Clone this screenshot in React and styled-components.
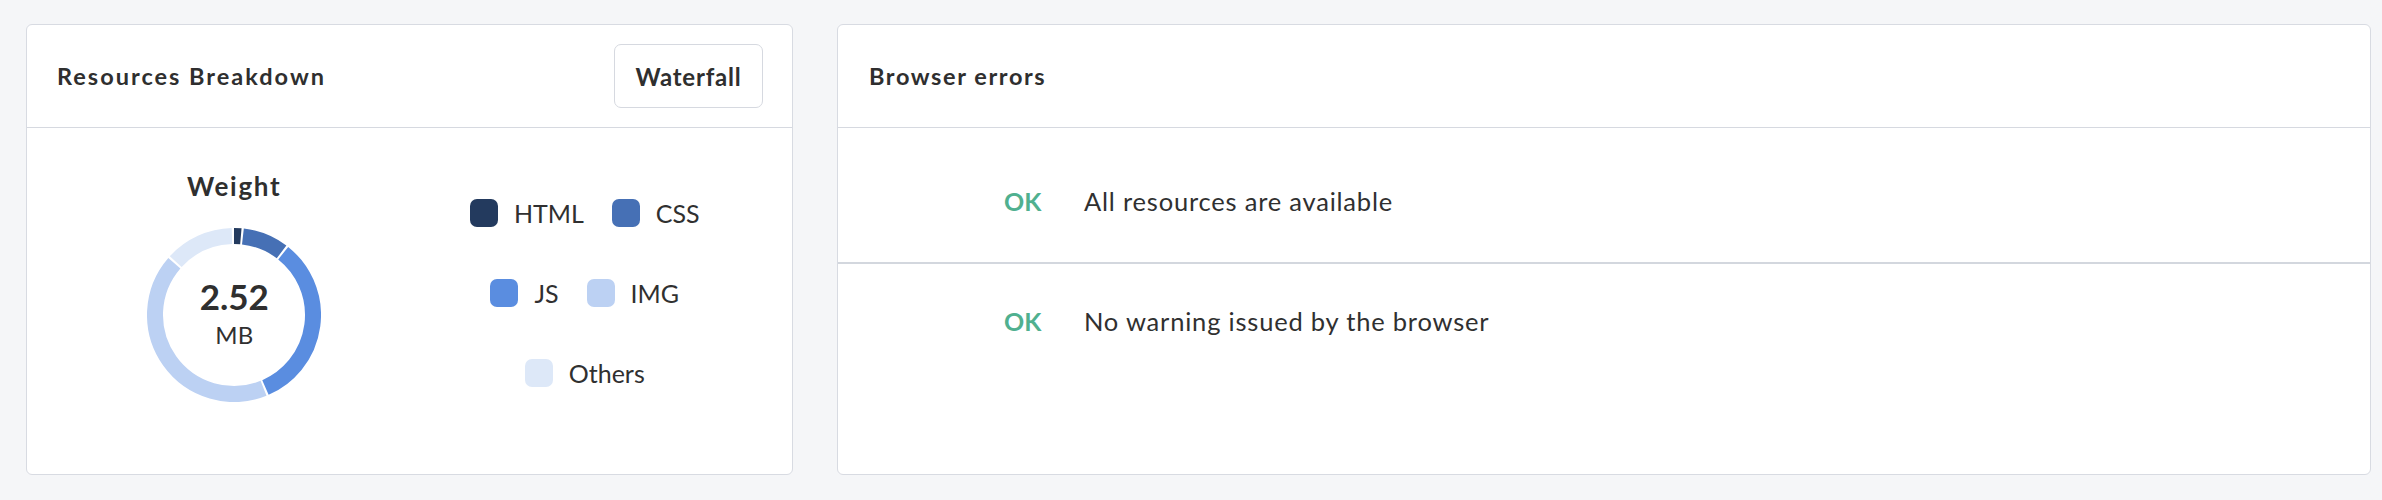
import React from 'react';
import styled, { createGlobalStyle } from 'styled-components';

const GlobalStyle = createGlobalStyle`
  body {
    margin: 0;
    background: #f5f6f8;
    font-family: Lato, "Liberation Sans", sans-serif;
    color: #303030;
  }
`

const Page = styled.div`
  display: grid;
  grid-template-columns: 1fr 2fr;
  gap: 44px;
  padding: 24px 11px 25px 26px;
`

const Card = styled.section`
  box-sizing: border-box;
  height: 451px;
  background: #fff;
  border: 1px solid #d8dbe2;
  border-radius: 6px;
  display: flex;
  flex-direction: column;
`

const Header = styled.div`
  height: 102px;
  border-bottom: 1px solid #d6d9e0;
  display: flex;
  align-items: center;
  justify-content: space-between;
  padding: 0 29px 0 ${p => p.$left || 30}px;
`

const Title = styled.h2`
  margin: 0;
  font-size: 23.5px;
  font-weight: 700;
  color: #2f2f2f;
  letter-spacing: ${p => p.$spacing || 2}px;
`

const Button = styled.button`
  box-sizing: border-box;
  width: 149px;
  height: 64px;
  background: #fff;
  border: 1px solid #d6d9e0;
  border-radius: 7px;
  font-family: inherit;
  font-size: 24px;
  font-weight: 700;
  letter-spacing: 0.8px;
  color: #2f2f2f;
  cursor: pointer;
`

const BreakdownBody = styled.div`
  display: grid;
  grid-template-columns: 1fr 1fr;
  padding: 0 32px;
`

const ChartCol = styled.div`
  display: flex;
  flex-direction: column;
  align-items: center;
  padding-top: 42px;
`

const ChartTitle = styled.div`
  font-size: 26px;
  line-height: 32px;
  font-weight: 700;
  letter-spacing: 1.7px;
  color: #2f2f2f;
`

const DonutWrap = styled.div`
  position: relative;
  width: 174px;
  height: 174px;
  margin-top: 26px;
`

const DonutCenter = styled.div`
  position: absolute;
  inset: 0;
  display: flex;
  flex-direction: column;
  align-items: center;
  justify-content: center;
  padding-bottom: 4px;
`

const Value = styled.div`
  font-size: 35px;
  line-height: 40px;
  font-weight: 700;
  color: #2f2f2f;
`

const Unit = styled.div`
  font-size: 24px;
  line-height: 30px;
  margin-top: 4px;
`

const Legend = styled.div`
  display: flex;
  flex-direction: column;
  align-items: center;
  gap: 52px;
  padding-top: 71px;
`

const LegendRow = styled.div`
  display: flex;
  gap: 28px;
`

const LegendItem = styled.div`
  display: flex;
  align-items: center;
  gap: 16px;
  font-size: 25px;
  line-height: 28px;
`

const Swatch = styled.span`
  width: 28px;
  height: 28px;
  border-radius: 7px;
  background: ${p => p.$color};
`

const ErrorsBody = styled.div`
  padding-top: 12px;
`

const CheckRow = styled.div`
  box-sizing: border-box;
  height: ${p => (p.$divider ? 124 : 114)}px;
  display: grid;
  grid-template-columns: 80px 1fr;
  align-items: center;
  padding-left: 166px;
  border-bottom: ${p => (p.$divider ? '2px solid #d3d7de' : 'none')};
`

const Status = styled.span`
  font-size: 25px;
  font-weight: 700;
  color: #50b08f;
`

const Message = styled.span`
  font-size: 25.5px;
  letter-spacing: 0.8px;
  color: #303030;
`

const segments = [
  { label: 'HTML', share: 1.8, color: '#233a5e' },
  { label: 'CSS', share: 8.9, color: '#4670b5' },
  { label: 'JS', share: 33.2, color: '#5a8de0' },
  { label: 'IMG', share: 42.9, color: '#bcd1f3' },
  { label: 'Others', share: 13.2, color: '#dde8f8' },
];

const checks = [
  { status: 'OK', text: 'All resources are available' },
  { status: 'OK', text: 'No warning issued by the browser' },
];

const polar = (c, r, deg) => {
  const a = ((deg - 90) * Math.PI) / 180;
  return [c + r * Math.cos(a), c + r * Math.sin(a)];
};

function Donut() {
  const size = 174;
  const c = size / 2;
  const r = 79;
  const gap = 1.5;
  let start = 0;
  const arcs = segments.map(s => {
    const span = (s.share / 100) * 360;
    const from = start;
    const to = start + span - gap;
    start += span;
    const [x1, y1] = polar(c, r, from);
    const [x2, y2] = polar(c, r, to);
    const large = to - from > 180 ? 1 : 0;
    return (
      <path
        key={s.label}
        d={`M ${x1} ${y1} A ${r} ${r} 0 ${large} 1 ${x2} ${y2}`}
        fill="none"
        stroke={s.color}
        strokeWidth="16"
      />
    );
  });
  return (
    <DonutWrap>
      <svg width={size} height={size} viewBox={`0 0 ${size} ${size}`}>
        {arcs}
      </svg>
      <DonutCenter>
        <Value>2.52</Value>
        <Unit>MB</Unit>
      </DonutCenter>
    </DonutWrap>
  );
}

const legendRows = [segments.slice(0, 2), segments.slice(2, 4), segments.slice(4)];

export default function App() {
  return (
    <>
      <GlobalStyle />
      <Page>
        <Card>
          <Header>
            <Title>Resources Breakdown</Title>
            <Button>Waterfall</Button>
          </Header>
          <BreakdownBody>
            <ChartCol>
              <ChartTitle>Weight</ChartTitle>
              <Donut />
            </ChartCol>
            <Legend>
              {legendRows.map((row, i) => (
                <LegendRow key={i}>
                  {row.map(s => (
                    <LegendItem key={s.label}>
                      <Swatch $color={s.color} />
                      {s.label}
                    </LegendItem>
                  ))}
                </LegendRow>
              ))}
            </Legend>
          </BreakdownBody>
        </Card>
        <Card>
          <Header $left={31}>
            <Title $spacing={1.6}>Browser errors</Title>
          </Header>
          <ErrorsBody>
            {checks.map((c, i) => (
              <CheckRow key={c.text} $divider={i === 0}>
                <Status>{c.status}</Status>
                <Message>{c.text}</Message>
              </CheckRow>
            ))}
          </ErrorsBody>
        </Card>
      </Page>
    </>
  );
}
